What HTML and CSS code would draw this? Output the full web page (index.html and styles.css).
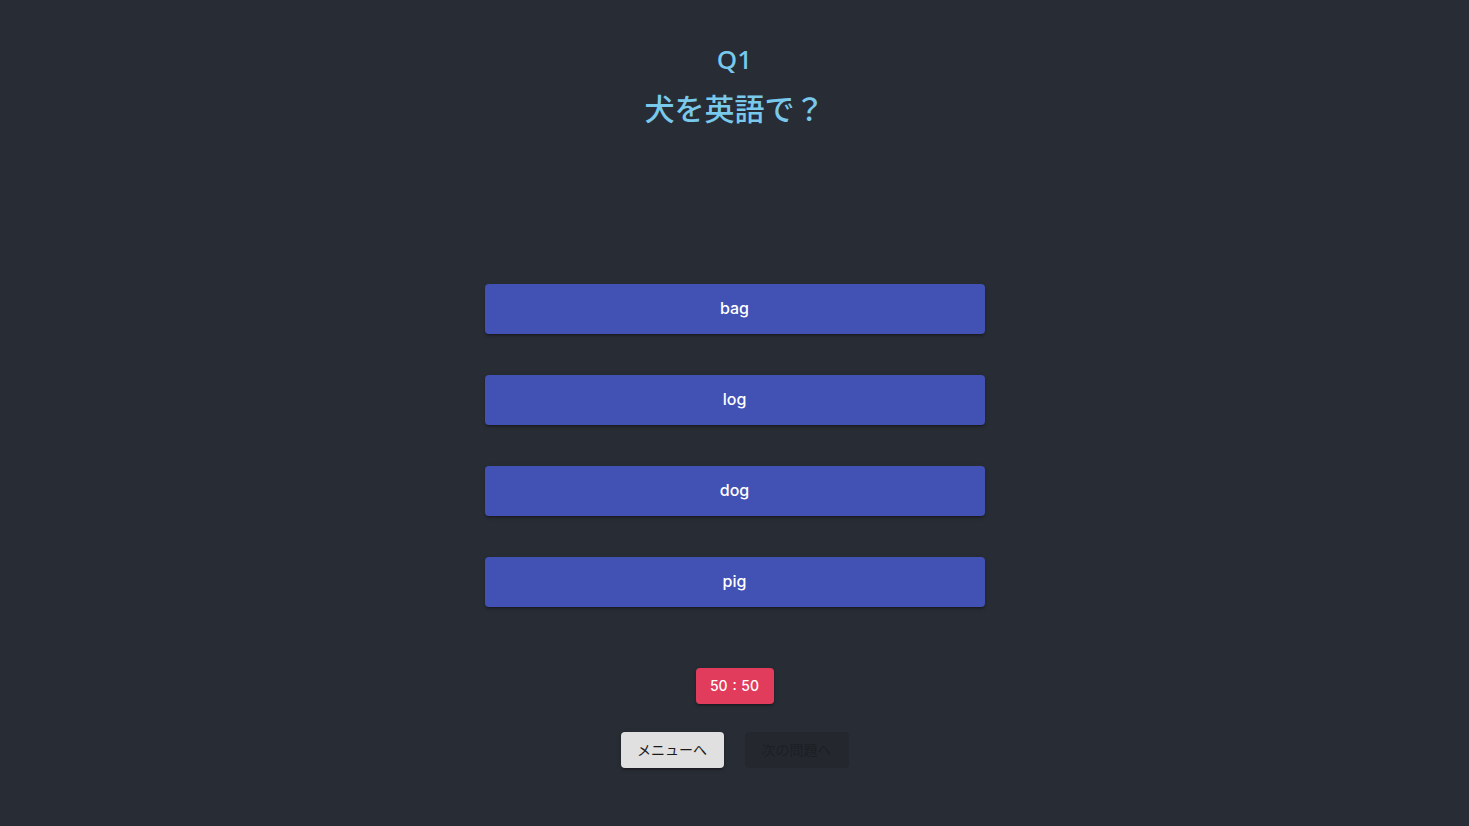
FILE: index.html
```html
<!DOCTYPE html>
<html lang="ja">
<head>
<meta charset="utf-8">
<title>Quiz</title>
<link rel="stylesheet" href="styles.css">
</head>
<body>
<main class="app">
  <header class="head">
    <h1 class="qnum">Q1</h1>
    <h2 class="question">犬を英語で？</h2>
  </header>
  <section class="choices">
    <button class="choice">bag</button>
    <button class="choice">log</button>
    <button class="choice">dog</button>
    <button class="choice">pig</button>
  </section>
  <div class="lifeline">
    <button class="fifty">50 : 50</button>
  </div>
  <div class="nav">
    <button class="menu">メニューへ</button>
    <button class="next" disabled>次の問題へ</button>
  </div>
</main>
</body>
</html>
```

FILE: styles.css
```css
html, body {
  margin: 0;
  padding: 0;
  background: #282c34;
  height: 100%;
}
body {
  font-family: "Liberation Sans", "Noto Sans CJK JP", sans-serif;
}
.app {
  display: flex;
  flex-direction: column;
  align-items: center;
  padding-top: 42px;
}
.head {
  display: flex;
  flex-direction: column;
  align-items: center;
  color: #78c9ec;
  font-family: "Noto Sans CJK JP", sans-serif;
}
.qnum {
  margin: 0;
  font-family: "Noto Sans", "Noto Sans CJK JP", sans-serif;
  font-size: 26px;
  font-weight: 500;
  line-height: 34px;
}
.question {
  margin: 14px 0 0;
  font-size: 30px;
  font-weight: 500;
  line-height: 34px;
}
.choices {
  margin-top: 160px;
  display: flex;
  flex-direction: column;
  gap: 41px;
}
button {
  border: none;
  cursor: pointer;
}
.choice {
  width: 500px;
  height: 50px;
  padding: 0 0 2px;
  border-radius: 4px;
  background: #4251b4;
  color: #fff;
  font-family: "Inter", "Liberation Sans", sans-serif;
  font-size: 16px;
  font-weight: 500;
  box-shadow: 0 3px 1px -2px rgba(0,0,0,0.2), 0 2px 2px 0 rgba(0,0,0,0.14), 0 1px 5px 0 rgba(0,0,0,0.12);
}
.lifeline {
  margin-top: 61px;
}
.fifty {
  width: 78px;
  height: 36px;
  padding: 0 0 1px;
  border-radius: 4px;
  background: #e23c5c;
  color: #fff;
  font-family: "Inter", "Liberation Sans", sans-serif;
  font-size: 14px;
  font-weight: 500;
  word-spacing: 1px;
  box-shadow: 0 3px 1px -2px rgba(0,0,0,0.2), 0 2px 2px 0 rgba(0,0,0,0.14), 0 1px 5px 0 rgba(0,0,0,0.12);
}
.nav {
  margin-top: 28px;
  display: flex;
  gap: 21px;
}
.menu, .next {
  height: 36px;
  padding: 0 0 2px;
  border-radius: 4px;
  font-family: "Noto Sans CJK JP", sans-serif;
  font-size: 14px;
}
.menu {
  width: 103px;
  background: #e0e0e0;
  color: #1a1a1a;
  box-shadow: 0 3px 1px -2px rgba(0,0,0,0.2), 0 2px 2px 0 rgba(0,0,0,0.14), 0 1px 5px 0 rgba(0,0,0,0.12);
}
.next {
  width: 104px;
  background: #24272e;
  color: #1c1f24;
  cursor: default;
}
```
